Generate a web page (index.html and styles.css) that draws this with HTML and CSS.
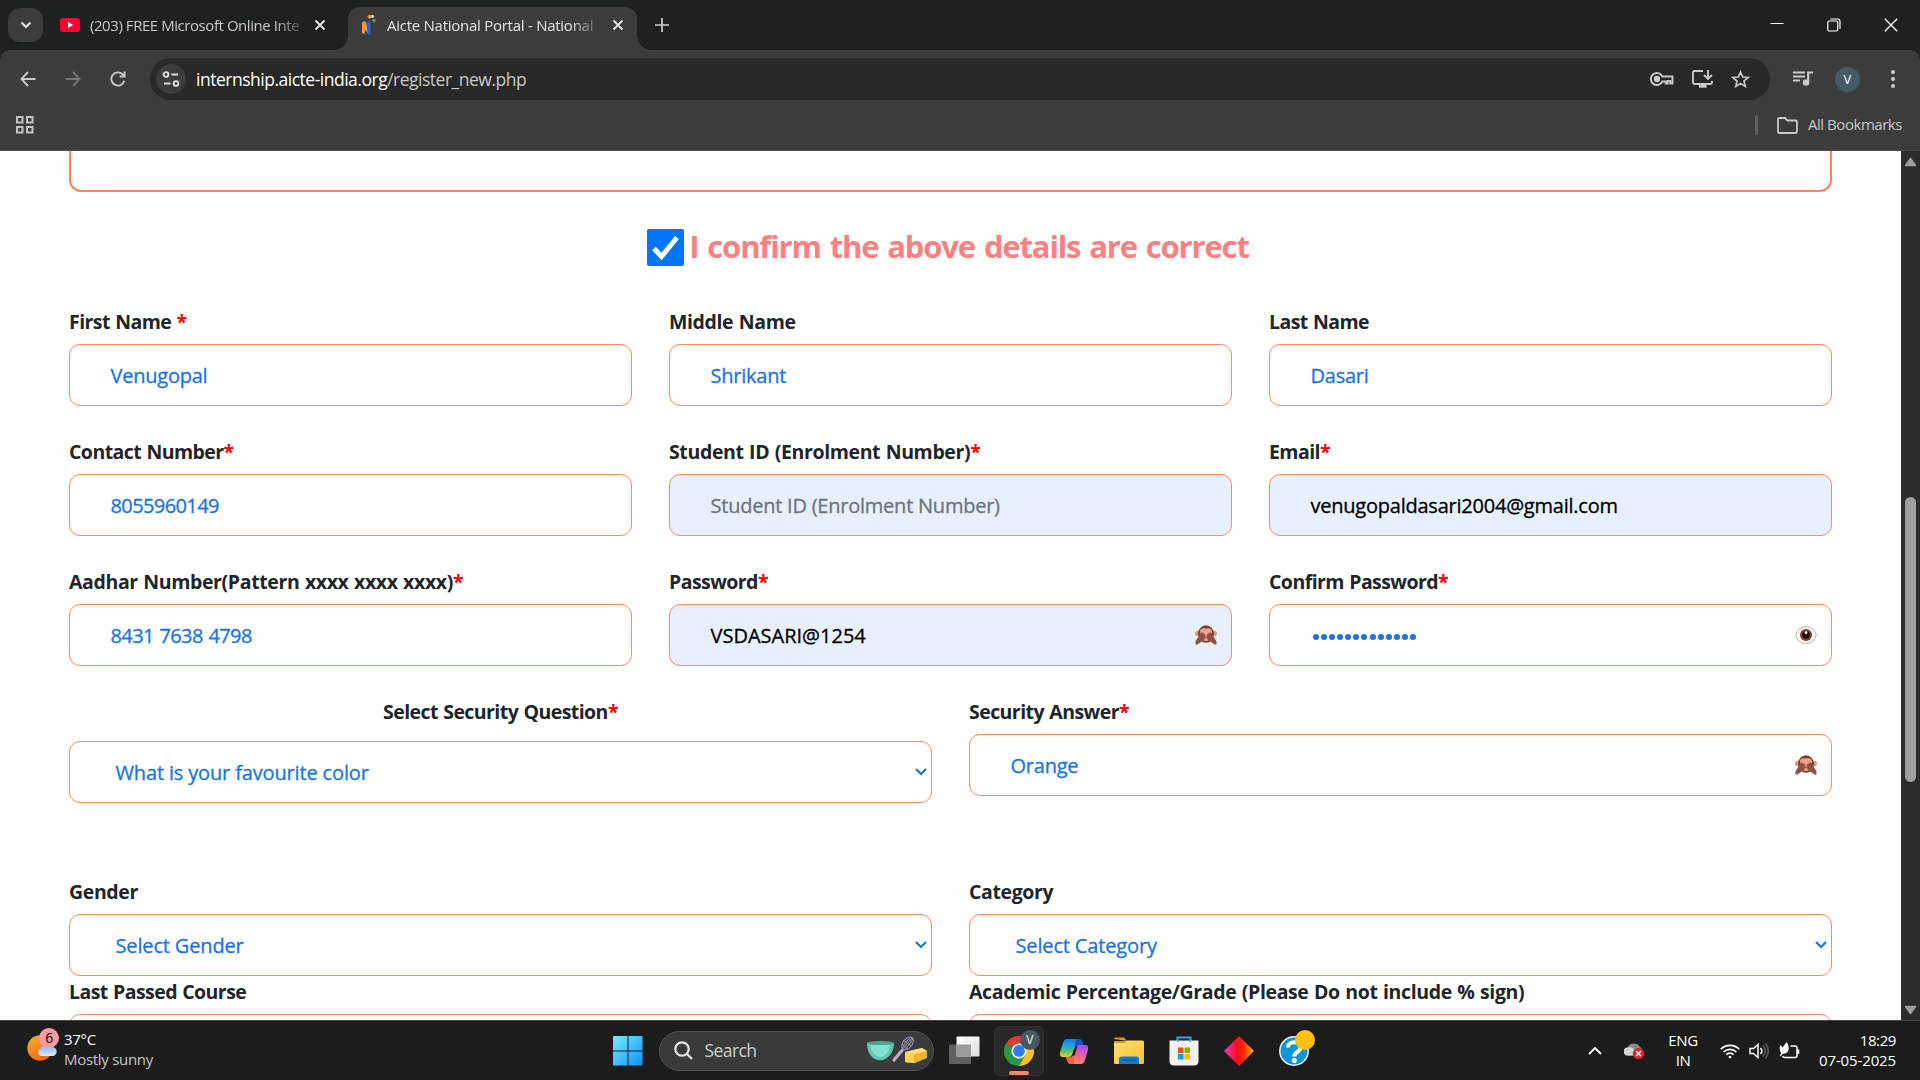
FILE: index.html
```html
<!DOCTYPE html>
<html lang="en">
<head>
<meta charset="utf-8">
<title>Aicte National Portal - National</title>
<link rel="stylesheet" href="styles.css">
</head>
<body>
<svg class="defs" width="0" height="0" aria-hidden="true">
  <symbol id="monkey" viewBox="0 0 22 20">
    <circle cx="2.8" cy="8.5" r="2.7" fill="#e8927c"/><circle cx="19.2" cy="8.5" r="2.7" fill="#e8927c"/>
    <ellipse cx="11" cy="9" rx="7.9" ry="8.8" fill="#71402f"/>
    <path d="M5 7c0-4 3-4 6-3.6C14 3 17 3 17 7c0 2-.4 3-.9 4.200A5.500 5.500 0 0 1 11 16a5.500 5.500 0 0 1-5.100-4.800C5.400 10 5 9 5 7z" fill="#f2a08c"/>
    <path d="M10 12.500l1-1.500 1 1.500-1 1.500z" fill="#c9356e"/>
    <path d="M1 19.500c-1-1-.8-3 .3-4.500L4.500 10c.6-1.800 1.700-2.800 2.500-2.600.6 0 .7.600.7 1.100.7-.6 1.400-.3 1.400.5.900 0 1.200.6 1.100 1.400l-.6 3.400c-.3 1.600-1.500 2.500-3.200 3L3.500 18.800q-1.400 1.200-2.500.7z" fill="#8d5444"/>
    <path d="M21 19.500c1-1 .8-3-.3-4.500L17.500 10c-.6-1.800-1.700-2.800-2.500-2.600-.6 0-.7.600-.7 1.100-.7-.6-1.400-.3-1.400.5-.9 0-1.200.6-1.100 1.400l.6 3.400c.3 1.600 1.500 2.500 3.200 3l2.900 2q1.400 1.200 2.500.7z" fill="#8d5444"/>
  </symbol>
  <symbol id="caret" viewBox="0 0 12 8"><path d="M1 1l5 5 5-5" fill="none" stroke="#1a73e8" stroke-width="2.200"/></symbol>
  <symbol id="cross" viewBox="0 0 12 12"><path d="M1.500 1.500l9 9m0-9l-9 9" fill="none" stroke="currentColor" stroke-width="1.900"/></symbol>
</svg>

<header class="browser">
  <div class="tabstrip">
    <div class="tab-search"><svg width="12" height="8" viewBox="0 0 12 8"><path d="M1.500 1.500L6 6l4.500-4.500" fill="none" stroke="#e3e3e3" stroke-width="2.200"/></svg></div>
    <div class="tab">
      <svg class="fav" width="20" height="14" viewBox="0 0 20 14"><rect width="20" height="14" rx="3.200" fill="#ff0033"/><path d="M8 4l5.200 3L8 10z" fill="#fff"/></svg>
      <span class="tab-title tab-title-idle">(203) FREE Microsoft Online Inte</span>
      <svg class="tab-close" width="12" height="12"><use href="#cross"/></svg>
    </div>
    <div class="tab tab-active">
      <svg class="fav" width="16" height="22" viewBox="0 0 16 22"><path d="M1 8.500l3-1.500 2.500 5L7 20l-2.500-4.500L3.500 20 1 19z" fill="#f09a3e"/><path d="M5 8l4-1 .5 1v12.500l-2.500.5-1-7z" fill="#2463d8"/><circle cx="8.500" cy="2.800" r="2" fill="#ef8b4a"/><circle cx="11.500" cy="2.300" r="1.600" fill="#dadada"/><path d="M10.500 6l3.500-1.500.8 2.500-1.600 1.800z" fill="#3fae3f"/></svg>
      <span class="tab-title">Aicte National Portal - National</span>
      <svg class="tab-close" width="12" height="12"><use href="#cross"/></svg>
    </div>
    <svg class="new-tab" width="14" height="14" viewBox="0 0 14 14"><path d="M7 0v14M0 7h14" stroke="#d0d0d0" stroke-width="1.700"/></svg>
    <div class="window-buttons">
      <svg width="14" height="14" viewBox="0 0 14 14"><path d="M.5 5.500h13" stroke="#fff"/></svg>
      <svg width="14" height="14" viewBox="0 0 14 14" fill="none" stroke="#fff" stroke-width="1.200"><rect x=".8" y="3" width="10" height="10" rx="1.500"/><path d="M3.200 1h7.300a2.500 2.500 0 0 1 2.500 2.500v7.300"/></svg>
      <svg width="14" height="14" viewBox="0 0 14 14"><path d="M.8.8l12.400 12.400m0-12.400L.8 13.200" stroke="#fff" stroke-width="1.300"/></svg>
    </div>
  </div>

  <div class="toolbar">
    <svg class="nav" width="16" height="16" viewBox="0 0 16 16"><path d="M8 1L1.500 8 8 15M1.500 8H15.500" fill="none" stroke="#c9c9c9" stroke-width="1.900"/></svg>
    <svg class="nav" width="16" height="16" viewBox="0 0 16 16"><path d="M8 1l6.500 7L8 15M14.500 8H.5" fill="none" stroke="#777" stroke-width="1.900"/></svg>
    <svg class="nav" width="16" height="16" viewBox="0 0 16 16"><path d="M14.300 9.800A6.600 6.600 0 1 1 12.800 3.500L14.200 5" fill="none" stroke="#c9c9c9" stroke-width="1.900"/><path d="M15.600.5v6H9.600v-1.900h4.100V.5z" fill="#c9c9c9"/></svg>
    <div class="omnibox">
      <span class="site-info"><svg width="18" height="16" viewBox="0 0 18 16" fill="none" stroke="#dedede" stroke-width="1.900"><circle cx="4" cy="3.500" r="2.400"/><path d="M9.500 3.500H16M2 12.500h6.500"/><circle cx="14" cy="12.500" r="2.400"/></svg></span>
      <span class="url">internship.aicte-india.org<span class="path">/register_new.php</span></span>
      <div class="omni-icons">
        <svg width="24" height="14" viewBox="0 0 24 14" fill="none" stroke="#c9c9c9" stroke-width="1.900"><path d="M12.300 4.500H22.500v7h-2.200V9h-2.600v2.500h-2V9.500h-3.400A6 6 0 1 1 12.300 4.500z"/><circle cx="7" cy="7" r="2.200" fill="#c9c9c9"/></svg>
        <svg width="21" height="18" viewBox="0 0 21 18" fill="none" stroke="#c9c9c9" stroke-width="1.900"><path d="M11 1H2.500Q1 1 1 2.500v10Q1 14 2.500 14h16q1.500 0 1.500-1.500V11"/><path d="M16 0v8.500M12 5l4 4 4-4"/><path d="M7 16.200h7.500" stroke-width="3"/></svg>
        <svg width="19" height="18" viewBox="0 0 19 18"><path d="M9.500 2l2.200 5 5.400.5-4.100 3.600 1.200 5.300-4.700-2.800-4.700 2.800L6 11.100 1.900 7.500 7.300 7z" fill="none" stroke="#c9c9c9" stroke-width="1.700"/></svg>
      </div>
    </div>
    <svg class="media" width="20" height="16" viewBox="0 0 20 16"><path d="M0 1.500h12M0 5.500h12M0 9.500h7" stroke="#c9c9c9" stroke-width="1.900"/><circle cx="13" cy="11.500" r="3.200" fill="#c9c9c9"/><path d="M15.200 11.500V1.500H20" fill="none" stroke="#c9c9c9" stroke-width="2.200"/></svg>
    <span class="avatar">V</span>
    <svg class="kebab" width="4" height="18" viewBox="0 0 4 18" fill="#c9c9c9"><circle cx="2" cy="2" r="2"/><circle cx="2" cy="9" r="2"/><circle cx="2" cy="16" r="2"/></svg>
  </div>

  <div class="bookmarks">
    <svg width="20" height="20" viewBox="0 0 20 20" fill="none" stroke="#c4c4c4" stroke-width="2"><path d="M2 2h5.500v5.500H2zM12 2h5.500v5.500H12zM2 12h5.500v5.500H2zM12 12h5.500v5.500H12z"/></svg>
    <span class="divider"></span>
    <svg width="21" height="17" viewBox="0 0 21 17" fill="none" stroke="#c9c9c9" stroke-width="1.800"><path d="M1 2.500Q1 1 2.500 1H8l2.500 2.500h8Q20 3.500 20 5v9.500q0 1.500-1.500 1.500h-16Q1 16 1 14.500z"/></svg>
    <span class="all-bookmarks">All Bookmarks</span>
  </div>
</header>

<div class="viewport">
  <main class="page">
    <section class="details-end"></section>
    <div class="confirm">
      <span class="checkbox"><svg width="27" height="25" viewBox="0 0 27 25"><path d="M2 13.500l7.500 8L25 2.500" fill="none" stroke="#fff" stroke-width="5"/></svg></span>
      <span class="confirm-text">I confirm the above details are correct</span>
    </div>

    <form class="form">
      <div class="row thirds">
        <div class="field"><label class="snug">First Name <i>*</i></label><div class="input">Venugopal</div></div>
        <div class="field"><label>Middle Name</label><div class="input">Shrikant</div></div>
        <div class="field"><label class="snug">Last Name</label><div class="input">Dasari</div></div>
      </div>
      <div class="row thirds">
        <div class="field"><label class="snug">Contact Number<i>*</i></label><div class="input digits">8055960149</div></div>
        <div class="field"><label>Student ID (Enrolment Number)<i>*</i></label><div class="input autofill placeholder">Student ID (Enrolment Number)</div></div>
        <div class="field"><label class="snug">Email<i>*</i></label><div class="input autofill">venugopaldasari2004@gmail.com</div></div>
      </div>
      <div class="row thirds">
        <div class="field"><label>Aadhar Number(Pattern xxxx xxxx xxxx)<i>*</i></label><div class="input digits">8431 7638 4798</div></div>
        <div class="field"><label class="snug">Password<i>*</i></label><div class="input autofill plain">VSDASARI@1254<svg class="eye" width="22" height="20"><use href="#monkey"/></svg></div></div>
        <div class="field"><label class="snug">Confirm Password<i>*</i></label><div class="input"><span class="mask"><b></b><b></b><b></b><b></b><b></b><b></b><b></b><b></b><b></b><b></b><b></b><b></b><b></b></span><svg class="eye" width="22" height="20" viewBox="0 0 22 20"><ellipse cx="11" cy="10" rx="10" ry="8.500" fill="#f7f7f7" stroke="#aaa" stroke-width=".8"/><circle cx="11" cy="10" r="6" fill="#7d4533"/><circle cx="11" cy="10" r="3.800" fill="#180c09"/><circle cx="11" cy="7.700" r="1.400" fill="#fff"/></svg></div></div>
      </div>
      <div class="row halves security">
        <div class="field question"><label class="snug">Select Security Question<i>*</i></label><div class="input select">What is your favourite color<svg class="caret" width="12" height="8"><use href="#caret"/></svg></div></div>
        <div class="field"><label class="snug">Security Answer<i>*</i></label><div class="input">Orange<svg class="eye" width="22" height="20"><use href="#monkey"/></svg></div></div>
      </div>
      <div class="row halves stacked">
        <div class="field"><label>Gender</label><div class="input select">Select Gender<svg class="caret" width="12" height="8"><use href="#caret"/></svg></div></div>
        <div class="field"><label>Category</label><div class="input select">Select Category<svg class="caret" width="12" height="8"><use href="#caret"/></svg></div></div>
      </div>
      <div class="row halves stacked">
        <div class="field"><label class="snug">Last Passed Course</label><div class="input select"></div></div>
        <div class="field"><label>Academic Percentage/Grade (Please Do not include % sign)</label><div class="input"></div></div>
      </div>
    </form>
  </main>
  <aside class="scrollbar">
    <svg width="13" height="10" viewBox="0 0 13 10"><path d="M6.500 1.500L11.500 8.500h-10z" fill="#9f9f9f" stroke="#9f9f9f" stroke-width="1.500" stroke-linejoin="round"/></svg>
    <span class="thumb"></span>
    <svg class="down" width="13" height="10" viewBox="0 0 13 10"><path d="M6.500 8.500L1.500 1.500h10z" fill="#9f9f9f" stroke="#9f9f9f" stroke-width="1.500" stroke-linejoin="round"/></svg>
  </aside>
</div>

<footer class="taskbar">
  <div class="weather">
    <svg width="34" height="36" viewBox="0 0 34 36"><defs><linearGradient id="sun" x1="0" y1="0" x2=".5" y2="1"><stop stop-color="#f2b52e"/><stop offset="1" stop-color="#ee6a13"/></linearGradient><linearGradient id="cld" x1="0" y1="0" x2="0" y2="1"><stop stop-color="#86b2ee"/><stop offset="1" stop-color="#dceafd"/></linearGradient></defs><circle cx="13" cy="22" r="12.700" fill="url(#sun)"/><path d="M14 30a4 4 0 0 1-.5-7.500 6 6 0 0 1 10-1.500 4.600 4.600 0 0 1 3 9z" fill="url(#cld)"/></svg>
    <span class="badge">6</span>
    <div class="weather-text"><span>37°C</span><span class="dim">Mostly sunny</span></div>
  </div>

  <div class="apps">
    <svg class="start" width="30" height="30" viewBox="0 0 30 30"><defs><linearGradient id="win" x1="0" y1="0" x2="1" y2="1"><stop stop-color="#7deaff"/><stop offset="1" stop-color="#0a93f7"/></linearGradient></defs><path d="M1 0h13.500v14.500H0V1q0-1 1-1zM15.500 0H28.500q1 0 1 1v13.500h-14zM0 15.500h14.500v14H1q-1 0-1-1zM15.500 15.500h14V28.500q0 1-1 1h-13z" fill="url(#win)"/></svg>
    <div class="search">
      <svg width="19" height="19" viewBox="0 0 19 19" fill="none" stroke="#e3e3e3" stroke-width="2.300"><circle cx="8" cy="8" r="6.700"/><path d="M12.800 12.800L18 18"/></svg>
      <span>Search</span>
      <svg class="kitchen" width="62" height="28" viewBox="0 0 62 28"><path d="M1 7c0 10 5 15 9 16.500 1 1 7 1 8 0C22 22 28 17 28 7z" fill="#5ec9b2"/><path d="M4 9h20c-1 7-4 11-9 12C8 20 5 15 4 9z" fill="#86e2ce"/><ellipse cx="14.500" cy="7" rx="13.500" ry="2" fill="#46a692"/><path d="M28 24l8-9.500" stroke="#b9b0c8" stroke-width="3.200" stroke-linecap="round"/><g fill="none" stroke="#9f96b5" stroke-width="1"><ellipse cx="41.500" cy="7.500" rx="4.500" ry="7.500" transform="rotate(38 41.500 7.500)"/><ellipse cx="41.500" cy="7.500" rx="2" ry="7.500" transform="rotate(38 41.500 7.500)"/><path d="M36 14L46 2M37 4l8 6M36 8l6 5"/></g><path d="M39 16l17-4 5 3v7l-12 5-9-.5z" fill="#f0b32e"/><path d="M39 16l17-4 5 3-12 3z" fill="#ffe07a"/><path d="M39 16l9 2v9l-9-1z" fill="#ffd25a"/></svg>
    </div>
    <svg class="taskview" width="31" height="29" viewBox="0 0 31 29"><defs><linearGradient id="tv" x1="0" y1="0" x2="1" y2="1"><stop stop-color="#fff"/><stop offset="1" stop-color="#dedede"/></linearGradient></defs><rect y="8.500" width="22" height="19.500" rx="1" fill="#606060"/><rect x="7.500" y=".5" width="23" height="20" rx="1" fill="url(#tv)"/><path d="M7.500 8.500H22v12H7.500z" fill="#9b9b9b"/></svg>
    <div class="tile">
      <svg width="30" height="30" viewBox="0 0 30 30"><path d="M15 15L2 7.500A15 15 0 0 1 28 7.500z" fill="#e33b2e"/><path d="M15 15L2 7.500A15 15 0 0 0 15 30l6.500-11z" fill="#2a9a47"/><path d="M15 15l6.500 3.700L15 30A15 15 0 0 0 28 7.500H15z" fill="#fcc31e"/><circle cx="15" cy="15" r="7.500" fill="#fff"/><circle cx="15" cy="15" r="5.900" fill="#2f7bea"/></svg>
      <span class="profile">V</span><span class="running"></span>
    </div>
    <svg class="copilot" width="30" height="28" viewBox="0 0 30 28"><defs><linearGradient id="ca" x1="0" y1="0" x2="0" y2="1"><stop stop-color="#187be0"/><stop offset=".35" stop-color="#19a6e5"/><stop offset=".65" stop-color="#53bd79"/><stop offset="1" stop-color="#e7d02c"/></linearGradient><linearGradient id="cb" x1=".6" y1="0" x2=".3" y2="1"><stop stop-color="#a64bef"/><stop offset=".5" stop-color="#ef5da1"/><stop offset="1" stop-color="#ff9448"/></linearGradient></defs><path d="M8 2h11q3 0 4 4l1 3h-5q-3 0-4 3l-2 6q-1 2-4 2H4q-4 0-3-5L4 6q1-4 4-4z" fill="url(#ca)"/><path d="M17 2h3q3 0 4 4l.8 3H17.500l-2 1z" fill="#1b51c4"/><path d="M22 27H12q-3 0-4-4l-1-3h4q3 0 4-3l2-6q1-3 4-3h5q4 0 3 5l-3 10q-1 4-4 4z" fill="url(#cb)"/><path d="M15 27h-3q-3 0-4-4l-.8-3H13l2-1z" fill="#f2613c"/><path d="M13.500 18.500l3-9.500h2l-3 9.500z" fill="#1c1c1c"/></svg>
    <svg class="folder" width="30" height="28" viewBox="0 0 30 28"><defs><linearGradient id="fo" x1="0" y1="0" x2="1" y2="1"><stop stop-color="#ffe07a"/><stop offset="1" stop-color="#f9c02d"/></linearGradient></defs><path d="M0 2Q0 .5 1.500.5H10l3 3.500H0z M0 2v6h14V4z" fill="#d99c08"/><path d="M0 6h10l3-2.500h15.500Q30 3.500 30 5v20.500q0 1.500-1.500 1.500h-27Q0 27 0 25.500z" fill="url(#fo)"/><path d="M5 27v-5q0-2.500 2.500-2.500h15Q25 19.500 25 22v5z" fill="#0f7ad0"/><path d="M8.500 23h13" stroke="#0a4e92"/></svg>
    <svg class="store" width="30" height="30" viewBox="0 0 30 30"><path d="M8.500 6V1.500h13V6" fill="none" stroke="#28a8ea" stroke-width="2"/><path d="M.5 4.500h29V25q0 4.500-4.500 4.500H5Q.5 29.500.5 25z" fill="#f0f0f0"/><path d="M8 4.500V6h1.500V4.500zM20.500 4.500V6H22V4.500z" fill="#28a8ea"/><path d="M9 11.500h5.500V17H9z" fill="#f25022"/><path d="M15.500 11.500H21V17h-5.500z" fill="#7fba00"/><path d="M9 18h5.500v5.500H9z" fill="#00a4ef"/><path d="M15.500 18H21v5.500h-5.500z" fill="#ffb900"/></svg>
    <svg class="diamond" width="30" height="30" viewBox="0 0 30 30"><defs><linearGradient id="di"><stop stop-color="#f23cc0"/><stop offset=".45" stop-color="#fb0a16"/><stop offset=".65" stop-color="#fd2a08"/><stop offset="1" stop-color="#ffb400"/></linearGradient></defs><path d="M15 0l15 15-15 15L0 15z" fill="url(#di)"/></svg>
    <div class="help"><svg width="30" height="30" viewBox="0 0 30 30"><circle cx="15" cy="15" r="14.200" fill="#0e96d8" stroke="#f2f2f2" stroke-width="1.500"/><path d="M8.800 11.500c0-7 12.700-7 12.700 0 0 4.500-6.200 4.300-6.200 9" fill="none" stroke="#fff" stroke-width="4"/><circle cx="15.300" cy="24.500" r="2.500" fill="#fff"/></svg><span class="help-dot"></span></div>
  </div>

  <div class="tray">
    <svg class="up" width="14" height="9" viewBox="0 0 14 9"><path d="M1 8l6-6 6 6" fill="none" stroke="#fff" stroke-width="1.900"/></svg>
    <svg class="onedrive" width="21" height="18" viewBox="0 0 21 18"><path d="M4 13.500a4 4 0 0 1-.5-8A7 7 0 0 1 16 5q3.500 2 2.500 8.500z" fill="#8a8a8a"/><path d="M4 13.500a4 4 0 0 1-.5-8q6-1 8 4l-1 4z" fill="#d5d5d5"/><circle cx="14.500" cy="11.500" r="5.700" fill="#d9232e"/><path d="M12 9l5 5m0-5l-5 5" stroke="#fff" stroke-width="1.600"/></svg>
    <div class="lang"><span>ENG</span><span>IN</span></div>
    <svg class="wifi" width="20" height="16" viewBox="0 0 20 16" fill="none" stroke="#fff" stroke-width="1.700"><path d="M.8 6.200a13 13 0 0 1 18.400 0M3.600 9a9 9 0 0 1 12.800 0M6.400 11.700a5 5 0 0 1 7.200 0"/><circle cx="10" cy="14" r="1.300" fill="#fff" stroke="none"/></svg>
    <svg class="sound" width="20" height="18" viewBox="0 0 20 18" fill="none" stroke="#fff" stroke-width="1.500"><path d="M1 6.500h3.500L9 2.500v13l-4.500-4H1z"/><path d="M11.500 6a4.500 4.500 0 0 1 0 6"/><path d="M14 3.500a8 8 0 0 1 0 11M16.300 1.500a11 11 0 0 1 0 15" stroke="#5f5f5f"/></svg>
    <svg class="battery" width="21" height="18" viewBox="0 0 21 18"><path d="M11.500 4H16q2 0 2 2v7.500q0 2-2 2H6q-2 0-2.500-1.500M19.500 7.500v4.500" fill="none" stroke="#fff" stroke-width="1.500"/><path d="M1 3q2 .5 2.700 2.500L7.500 0c3 4 3.500 10-1.500 11.500L3.500 12 1.500 14.300l-.8-.8 1.600-2.200C.5 9.500.5 6 1 3z" fill="#fff"/></svg>
    <div class="clock"><span>18:29</span><span class="date">07-05-2025</span></div>
  </div>
</footer>
</body>
</html>
```
FILE: styles.css
```css
* { box-sizing: border-box; }
body {
  margin: 0; width: 1920px; height: 1080px; overflow: hidden;
  display: flex; flex-direction: column;
  font-family: "Open Sans", "Noto Sans", sans-serif; background: #fff;
}
svg { display: block; flex: none; }
.defs { position: absolute; }
i { font-style: normal; color: #ff0000; }

/* browser chrome */
.browser { height: 151px; flex: none; background: #1f2020; border-bottom: 1px solid #4b4b4b; }
.tabstrip { height: 50px; display: flex; align-items: flex-start; padding-left: 8px; color: #e3e3e3; }
.tab-search {
  width: 35px; height: 34px; margin: 8px 17px 0 0; border-radius: 12px; background: #3c3c3c;
  display: flex; align-items: center; justify-content: center;
}
.tab { width: 288px; height: 50px; display: flex; align-items: center; font-size: 15px; }
.tab .fav { margin-right: 10px; }
.tab-title {
  width: 208px; white-space: nowrap; line-height: 20px; letter-spacing: -.26px;
  -webkit-mask-image: linear-gradient(90deg, #000 88%, transparent 104%); mask-image: linear-gradient(90deg, #000 88%, transparent 104%);
}
.tab-title-idle { width: 211px; color: #c7c7c7; letter-spacing: -.44px; }
.tab-close { margin-left: 13px; }
.tab-active {
  position: relative; width: 289px; height: 43px; margin-top: 7px; padding: 0 0 7px 13px;
  border-radius: 12px 12px 0 0; background: #3c3c3c;
}
.tab-active .fav { margin-right: 10px; }
.tab-active .tab-close { margin-left: 17px; }
.tab-active::before, .tab-active::after { content: ""; position: absolute; bottom: 0; width: 14px; height: 14px; }
.tab-active::before { left: -14px; background: radial-gradient(circle at 0 0, transparent 13.500px, #3c3c3c 14px); }
.tab-active::after { right: -14px; background: radial-gradient(circle at 100% 0, transparent 13.500px, #3c3c3c 14px); }
.new-tab { margin: 18px 0 0 18px; }
.window-buttons { display: flex; gap: 43px; margin: 18px 22px 0 auto; }

.toolbar { height: 58px; display: flex; align-items: center; padding: 0 25px 0 20px; background: #3c3c3c; border-radius: 10px 10px 0 0; }
.nav { margin: 0 29px 0 0; }
.toolbar .nav:nth-child(3) { margin-right: 24px; }
.omnibox { width: 1620px; height: 42px; display: flex; align-items: center; padding: 0 20px 0 6px; border-radius: 21px; background: #282828; }
.site-info { width: 30px; height: 30px; border-radius: 15px; background: #3c3c3c; display: flex; align-items: center; justify-content: center; }
.url { margin-left: 10px; font-size: 17.5px; letter-spacing: -.49px; color: #fff; }
.path { color: #c7c7c7; }
.omni-icons { margin-left: auto; display: flex; align-items: center; gap: 18.500px; }
.omni-icons svg:first-child { margin-right: -1px; }
.media { margin-left: 23px; }
.avatar { width: 25px; height: 25px; margin: 0 31px 0 22px; border-radius: 50%; background: #455a64; color: #fff; font-size: 13px; line-height: 25px; text-align: center; }
.bookmarks { height: 42px; display: flex; align-items: center; padding: 0 18px 8px 15px; background: #3c3c3c; }
.divider { width: 3px; height: 20px; margin: 0 19px 0 auto; border-radius: 2px; background: #5f5f5f; }
.all-bookmarks { width: 94px; margin: -2px 0 0 10px; font-size: 15px; letter-spacing: -.46px; white-space: nowrap; color: #c7c7c7; }

/* page */
.viewport { flex: 1; min-height: 0; display: flex; overflow: hidden; }
.page { width: 1901px; padding: 0 69px; overflow: hidden; }
.details-end { height: 41px; border: 2px solid #ff7f50; border-top: 0; border-radius: 0 0 12px 12px; opacity: .95; }
.confirm { display: flex; justify-content: center; align-items: center; height: 38px; margin: 36.500px 0 41.500px; padding-right: 5px; }
.checkbox { width: 37px; height: 37px; margin-right: 5px; border-radius: 2px; background: #0075ff; display: flex; align-items: center; justify-content: center; }
.confirm-text { margin-top: -3px; font-size: 31px; font-weight: 700; letter-spacing: -1.150px; word-spacing: 2px; color: #ff8080; white-space: nowrap; }
.form { font-size: 20px; }
.row { display: grid; column-gap: 37px; height: 130px; }
.thirds { grid-template-columns: repeat(3, 563px); }
.halves { grid-template-columns: repeat(2, 863px); }
.security { height: 180px; }
.stacked { height: 100px; }
label { display: block; height: 36px; line-height: 28px; font-size: 19.5px; font-weight: 700; letter-spacing: -.37px; word-spacing: .8px; color: #212529; white-space: nowrap; }
.snug { letter-spacing: -.56px; }
.question label { height: 43px; text-align: center; }
.input {
  height: 62px; display: flex; align-items: center; padding: 0 14px 0 40.500px;
  border: 1px solid #ff8a62; border-radius: 11px; color: #1a73e8; letter-spacing: -.23px; white-space: nowrap;
  -webkit-text-stroke: .3px currentColor;
}
.digits { letter-spacing: -.6px; word-spacing: 1px; }
.autofill { background: #e8f0fe; color: #000; }
.placeholder { color: #6c757d; }
.plain { letter-spacing: 0; }
.select { padding: 0 4px 0 45.500px; letter-spacing: -.15px; }
.eye, .caret { margin-left: auto; }
.eye { margin-top: -1px; }
.mask { display: flex; gap: 2.170px; padding: 4px 0 0 2px; }
.mask b { width: 6px; height: 6px; border-radius: 50%; background: #1a73e8; }

.scrollbar { width: 19px; display: flex; flex-direction: column; align-items: center; padding: 6px 0 5px; background: #2c2c2c; }
.thumb { width: 11px; height: 285px; margin-top: 330px; border-radius: 6px; background: #9f9f9f; }
.down { margin-top: auto; }

/* taskbar */
.taskbar { height: 60px; flex: none; display: flex; border-top: 1px solid #454545; background: #1c1c1c; color: #fff; font-size: 15px; letter-spacing: -.4px; }
.weather { position: relative; width: 612.500px; display: flex; padding: 5px 0 0 27px; }
.badge { position: absolute; left: 39px; top: 7px; width: 20px; height: 20px; border-radius: 50%; background: #ff99a4; color: #000; font-size: 14px; line-height: 20px; text-align: center; }
.weather-text, .lang, .clock { display: flex; flex-direction: column; line-height: 20px; }
.weather-text { margin: 3px 0 0 3px; letter-spacing: -.29px; }
.dim { color: #c5c5c5; }
.apps { display: flex; align-items: center; height: 59px; }
.search { width: 275px; height: 40px; margin: 0 15px 0 16px; padding: 0 5px 1px 14px; display: flex; align-items: center; border: 1px solid #505050; border-radius: 20px; background: #3a3a3a; font-size: 17.5px; letter-spacing: -.57px; color: #cfcfcf; }
.search span { margin-left: 12px; }
.kitchen { margin-left: auto; }
.tile { position: relative; width: 50px; height: 50px; margin: 0 15px 0 14px; padding: 10px; border: 1px solid #303030; border-radius: 6px; background: #292929; display: flex; align-items: center; justify-content: center; }
.profile { position: absolute; left: 25px; top: 3px; width: 20px; height: 20px; border-radius: 50%; background: #455a64; color: #dadada; font-size: 12px; font-weight: 600; line-height: 20px; text-align: center; }
.running { position: absolute; left: 14px; bottom: 0; width: 20px; height: 4px; border-radius: 2px; background: #f4846c; }
.folder { margin: 0 25px; }
.diamond { margin: 0 25px; }
.help { position: relative; }
.help-dot { position: absolute; left: 16px; top: -6px; width: 20px; height: 20px; border-radius: 50%; background: #ffc20e; }
.tray { margin-left: auto; height: 59px; display: flex; align-items: center; padding-right: 24px; }
.onedrive { margin: 0 22px; }
.lang { align-items: center; width: 32px; margin-top: -1px; }
.wifi { margin: 0 9px 0 21px; }
.sound { margin-right: 10px; }
.clock { width: 78px; margin: -2px 0 0 18px; align-items: flex-end; }
.date { letter-spacing: -.13px; }
```
